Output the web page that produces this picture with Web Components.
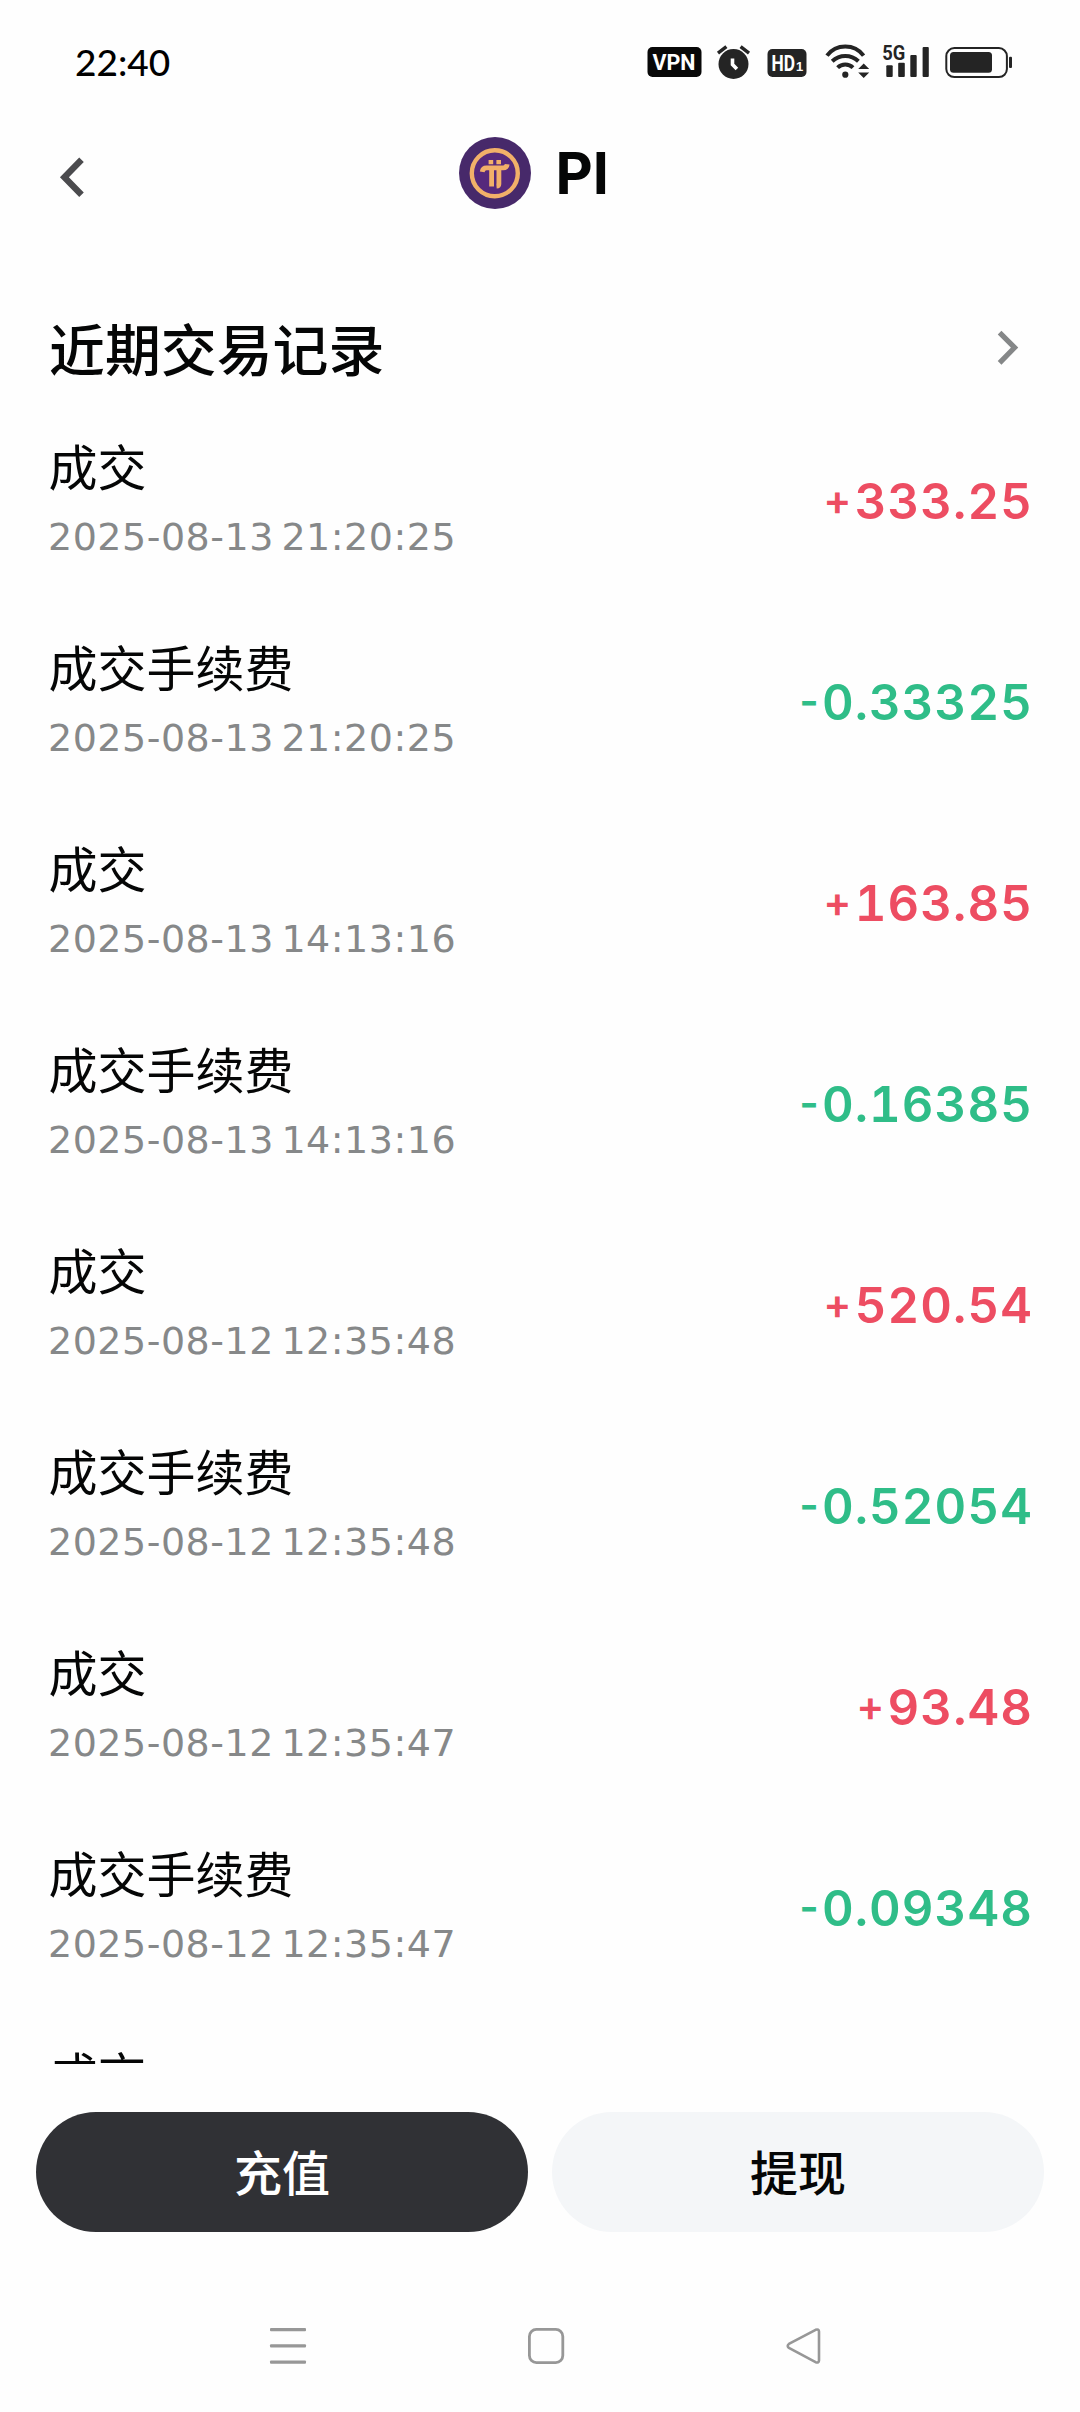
<!DOCTYPE html>
<html lang="zh-CN">
<head>
<meta charset="utf-8">
<title>PI</title>
<style>
html,body{margin:0;padding:0;background:#fefefe}
body{width:1080px;height:2412px;overflow:hidden;font-family:"Noto Sans CJK SC",sans-serif;color:#050606}
</style>
</head>
<body>
<wallet-page></wallet-page>
<script>
function define(name, html) {
  const t = document.createElement('template');
  t.innerHTML = html;
  customElements.define(name, class extends HTMLElement {
    constructor() {
      super();
      this.attachShadow({ mode: 'open' }).appendChild(t.content.cloneNode(true));
    }
  });
}

define('status-bar', `
<style>
:host{display:flex;height:100px;align-items:flex-start;box-sizing:border-box;padding:42px 65px 0 75px}
.time{font:500 37px/40px Lato,sans-serif;color:#000;margin-right:auto}
svg{display:block;height:40px;flex:none;font-family:"Liberation Sans",sans-serif;font-weight:700}
</style>
<span class="time">22:40</span>
<svg width="55" viewBox="0 0 55 40"><rect x=".5" y="5" width="54" height="30" rx="5" fill="#080808"/><text x="5.5" y="28" font-family="Roboto" font-size="22.500" fill="#fff" textLength="43" lengthAdjust="spacingAndGlyphs">VPN</text></svg>
<svg width="35" viewBox="0 0 35 40" style="margin-left:14px" fill="none" stroke="#242424" stroke-width="3.4"><circle cx="17.5" cy="22" r="15" fill="#242424" stroke="none"/><path d="M2 11.2 10.4 4.6M24.6 4.6 33 11.2"/><path d="M16.5 16.5v6l4.4 4.6" stroke="#fff" stroke-width="3.6"/></svg>
<svg width="40" viewBox="0 0 40 40" style="margin-left:16px"><rect x=".5" y="7" width="39" height="28" rx="5" fill="#242424"/><text x="4.500" y="28.800" font-family="Roboto" font-size="21.500" fill="#fff" textLength="23.500" lengthAdjust="spacingAndGlyphs">HD</text><text x="29" y="28.800" font-size="13" fill="#fff">1</text></svg>
<svg width="48" viewBox="0 0 48 40" style="margin-left:17px" fill="none" stroke="#242424" stroke-width="4"><path d="M3 13.6A23 23 0 0 1 39.6 13.6M8.2 19.3A19 19 0 0 1 34.4 19.3M13.6 25.6A11 11 0 0 1 29 25.6"/><g fill="#242424" stroke="none"><circle cx="21.3" cy="32.7" r="3.1"/><path d="M39.7 21.6 45.2 27H34.2zM34.2 30.5h11L39.7 36z"/></g></svg>
<svg width="50" viewBox="0 0 50 40" style="margin-left:8px" fill="#242424"><rect x="6.3" y="23.3" width="6.4" height="11.7" rx="1"/><rect x="18.2" y="20.8" width="6.6" height="14.2" rx="1"/><rect x="30.3" y="13" width="6.4" height="22" rx="1"/><rect x="42.6" y="5" width="6.2" height="30" rx="1"/><text x="2.2" y="18.2" font-family="Roboto" font-size="20.500" textLength="23" lengthAdjust="spacingAndGlyphs">5G</text></svg>
<svg width="72" viewBox="0 0 72 40" style="margin-left:13px"><rect x="3.3" y="6.1" width="60.6" height="29" rx="8" fill="none" stroke="#242424" stroke-width="2"/><rect x="7" y="10" width="42" height="20.7" rx="3.5" fill="#242424"/><rect x="66" y="14.7" width="3" height="11.3" rx="1" fill="#242424"/></svg>
`);

define('coin-header', `
<style>
:host{display:flex;height:146px;align-items:center;box-sizing:border-box;padding-left:56px}
svg{display:block;flex:none}
.back{margin-top:8px}
.logo{margin-left:372.500px}
.name{font:680 57.500px/72px Inter,sans-serif;margin-left:25px;color:#050606}
</style>
<svg class="back" width="30" height="44" viewBox="0 0 30 44" fill="none" stroke="#4b4b4e" stroke-width="6.4" stroke-linejoin="miter"><path d="M25.5 4.800 8.400 22.300l17.100 17.500"/></svg>
<svg class="logo" width="72" height="72" viewBox="0 0 72 72"><circle cx="36" cy="36" r="36" fill="#47296a"/><circle cx="35.8" cy="36.2" r="23" fill="#56297c" stroke="#f2b069" stroke-width="4.4"/><g fill="none" stroke="#f2b069" stroke-width="4.8"><path d="M23.2 34.8q.6-3.9 4.4-3.9h16.6q3.6 0 4-3.6M32.6 31v18.4M39.9 31v16q0 2-2.4 2.2" /></g><path d="M29.6 23h4.6v4.2h-4.6zM37.4 23H42v4.2h-4.6z" fill="#f2b069"/></svg>
<span class="name"><slot></slot></span>
`);

define('section-title', `
<style>
:host{display:flex;height:80px;align-items:center;justify-content:space-between;padding:61px 57px 14px 49px}
h2{margin:0;font:500 55.900px/80px "Noto Sans CJK SC",sans-serif}
svg{display:block;margin-top:1px}
</style>
<h2><slot></slot></h2>
<svg width="28" height="36" viewBox="0 0 28 36" fill="none" stroke="#858788" stroke-width="5.2"><path d="M4.600 2.600 19.6 17.600 4.600 32.800"/></svg>
`);

define('record-row', `
<style>
:host{display:flex;height:201px;flex:none;align-items:center;justify-content:space-between;padding:0 47px 0 48px;color:#2fbd88}
:host([gain]){color:#ed4d62}
.info{display:flex;flex-direction:column;color:#050606}
.label{font:400 49px/70px "Noto Sans CJK SC",sans-serif;margin:-2px 0 2px .5px}
.date{font:400 38px/70px "DejaVu Sans",sans-serif;color:#868889;letter-spacing:.5px;word-spacing:-5px;white-space:pre}
.amount{display:flex;align-items:center;font:560 49px/70px Inter,sans-serif;font-feature-settings:"tnum";letter-spacing:1.1px}
::slotted([slot=sign]){font-feature-settings:normal;font-size:42px;margin:-3px 2px 0 0}
</style>
<div class="info"><span class="label"><slot name="label"></slot></span><span class="date"><slot name="date"></slot></span></div>
<div class="amount"><slot name="sign"></slot><slot name="amount"></slot></div>
`);

define('pill-button', `
<style>
:host{display:flex;flex:1;box-sizing:border-box;height:120px;padding-bottom:5px;border-radius:60px;align-items:center;justify-content:center;background:#f4f6f8;color:#050606;font:500 48px/70px "Noto Sans CJK SC",sans-serif}
:host([primary]){background:#303135;color:#fff}
</style><slot></slot>
`);

define('nav-bar', `
<style>
:host{display:flex;height:180px;box-sizing:border-box;padding:94px 256px 0 268px;justify-content:space-between}
svg{display:block}
</style>
<svg width="40" height="40" viewBox="0 0 40 40" fill="#979797"><rect x="2" y="2" width="36" height="3.2" rx="1"/><rect x="2" y="18.2" width="36" height="3.4" rx="1"/><rect x="2" y="34.6" width="36" height="3.2" rx="1"/></svg>
<svg width="40" height="40" viewBox="0 0 40 40" fill="none" stroke="#979797" stroke-width="2.8"><rect x="3.4" y="3.4" width="33.4" height="33.2" rx="7"/></svg>
<svg width="40" height="40" viewBox="0 0 40 40" fill="none" stroke="#979797" stroke-width="2.6" stroke-linejoin="round"><path d="M4.9 17.9 31.6 3.8q3.4-1 3.4 1.7v29q0 2.700-3.400 1.700L4.900 21.900q-2.400-2 0-4z"/></svg>
`);

define('wallet-page', `
<style>
:host{display:flex;flex-direction:column;width:1080px;height:2412px;overflow:hidden;background:#fefefe}
.list{display:flex;flex-direction:column;height:1663px;overflow:hidden}
.actions{display:flex;gap:24px;padding:48px 36px 0}
</style>
<status-bar></status-bar>
<coin-header>PI</coin-header>
<section-title>近期交易记录</section-title>
<div class="list"></div>
<div class="actions"><pill-button primary>充值</pill-button><pill-button>提现</pill-button></div>
<nav-bar></nav-bar>
`);

const records = [
  ['成交', '2025-08-13 21:20:25', '+333.25'],
  ['成交手续费', '2025-08-13 21:20:25', '-0.33325'],
  ['成交', '2025-08-13 14:13:16', '+163.85'],
  ['成交手续费', '2025-08-13 14:13:16', '-0.16385'],
  ['成交', '2025-08-12 12:35:48', '+520.54'],
  ['成交手续费', '2025-08-12 12:35:48', '-0.52054'],
  ['成交', '2025-08-12 12:35:47', '+93.48'],
  ['成交手续费', '2025-08-12 12:35:47', '-0.09348'],
  ['成交', '', '']
];
const list = document.querySelector('wallet-page').shadowRoot.querySelector('.list');
for (const [label, date, amount] of records) {
  const row = document.createElement('record-row');
  if (amount[0] === '+') row.setAttribute('gain', '');
  const parts = { label, date, sign: amount[0] || '', amount: amount.slice(1) };
  for (const key in parts) {
    const s = document.createElement('span');
    s.slot = key;
    s.textContent = parts[key] || (key === 'date' ? '\u00a0' : '');
    row.appendChild(s);
  }
  list.appendChild(row);
}
</script>
</body>
</html>
